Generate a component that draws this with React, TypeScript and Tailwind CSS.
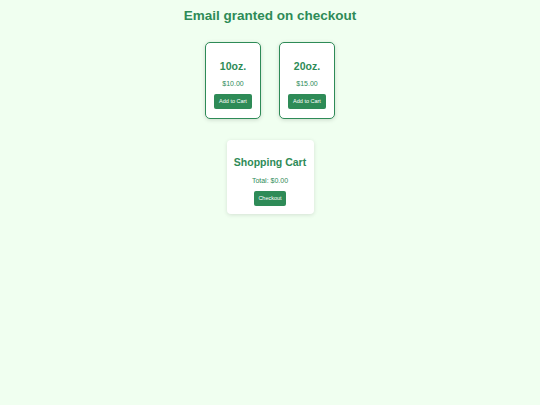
import React from "react";

const products = [
  { name: "10oz.", price: "$10.00" },
  { name: "20oz.", price: "$15.00" },
];

export default function App() {
  return (
    <div className="min-h-[405px] w-[540px] bg-[#f0fff0] flex flex-col items-center text-[#2e8b57] font-['Liberation_Sans',Arial,sans-serif]">
      <h1 className="mt-[8px] text-[13.5px] leading-[16px] font-bold">Email granted on checkout</h1>
      <div className="mt-[18px] flex gap-[18px]">
        {products.map((p) => (
          <div
            key={p.name}
            className="w-[56px] h-[77px] bg-white border border-[#2e8b57] rounded-[5px] shadow-[0_1px_4px_rgba(0,0,0,0.15)] flex flex-col items-center"
          >
            <div className="mt-[17px] text-[10.5px] leading-[12px] font-bold">{p.name}</div>
            <div className="mt-[7px] text-[7px] leading-[9px]">{p.price}</div>
            <button className="mt-[6px] w-[38px] h-[15px] bg-[#2e8b57] text-white text-[5.5px] rounded-[2px] flex items-center justify-center">
              Add to Cart
            </button>
          </div>
        ))}
      </div>
      <div className="mt-[21px] w-[87px] h-[74px] bg-white rounded-[4px] shadow-[0_1px_4px_rgba(0,0,0,0.12)] flex flex-col items-center">
        <div className="mt-[16px] text-[10.5px] leading-[12px] font-bold whitespace-nowrap">Shopping Cart</div>
        <div className="mt-[8px] text-[7px] leading-[9px]">Total: $0.00</div>
        <button className="mt-[6px] w-[32px] h-[15px] bg-[#2e8b57] text-white text-[5.5px] rounded-[2px] flex items-center justify-center">
          Checkout
        </button>
      </div>
    </div>
  );
}
